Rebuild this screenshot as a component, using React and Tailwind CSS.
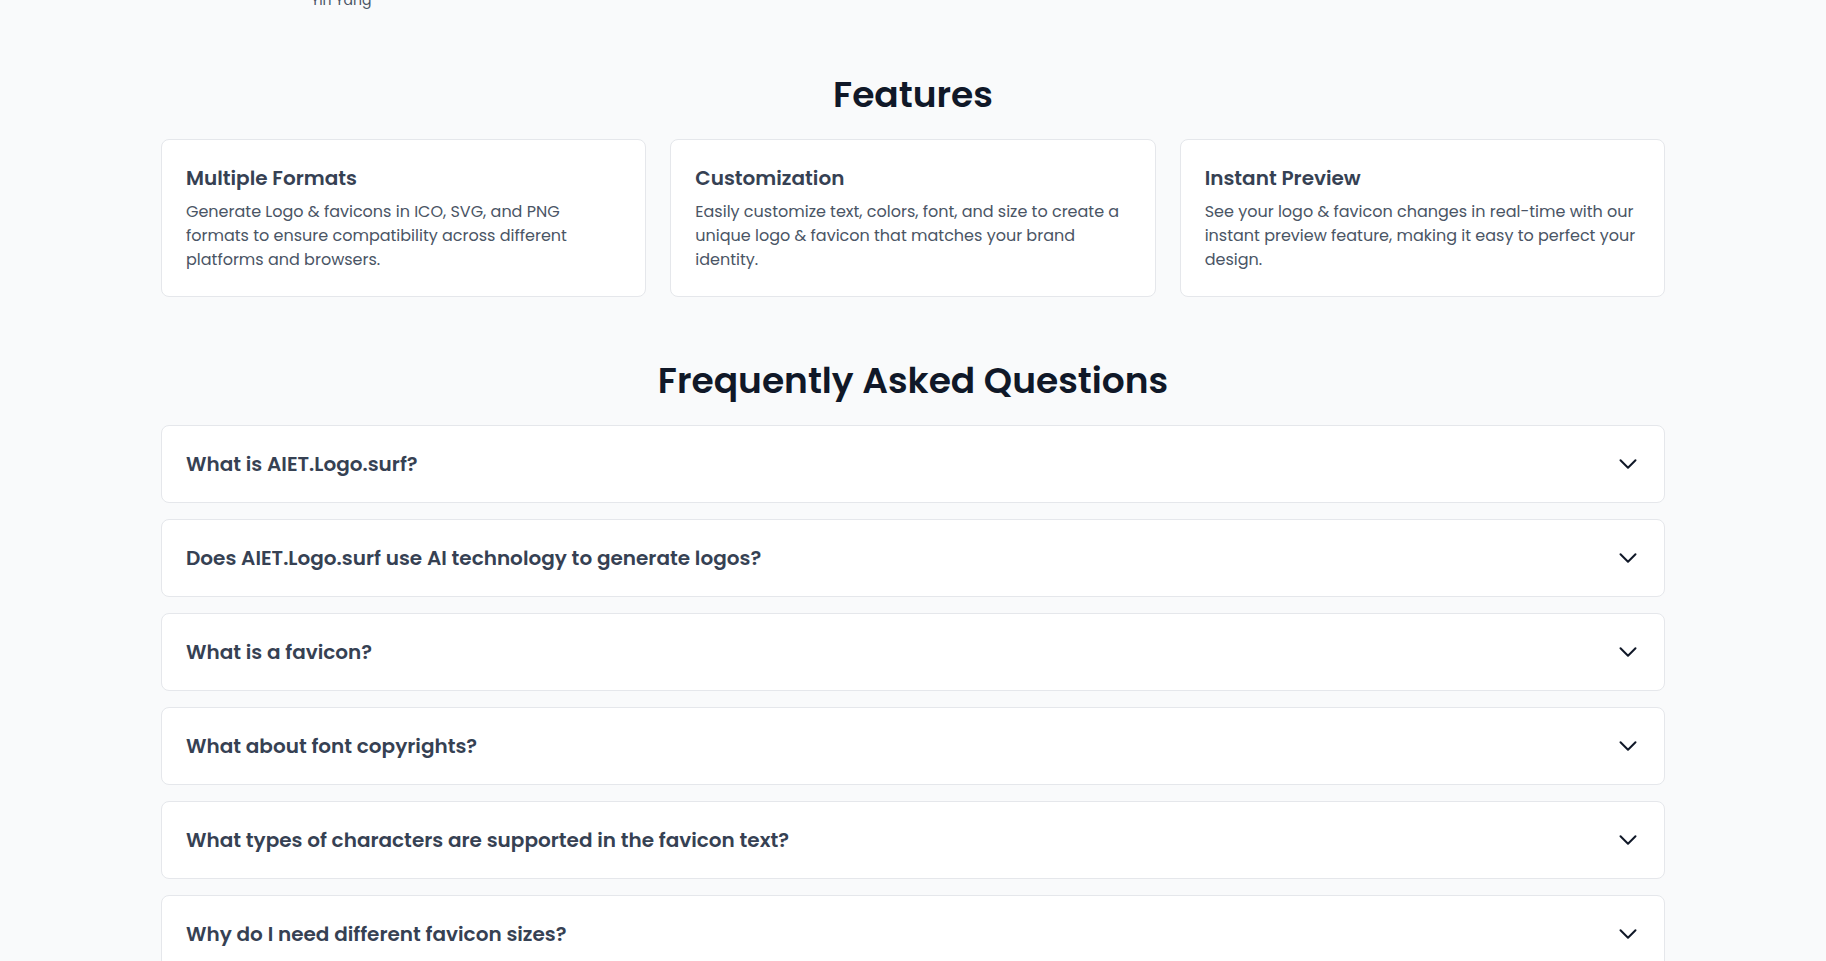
import React from "react";

const features = [
  {
    title: "Multiple Formats",
    lines: [
      "Generate Logo & favicons in ICO, SVG, and PNG",
      "formats to ensure compatibility across different",
      "platforms and browsers.",
    ],
  },
  {
    title: "Customization",
    lines: [
      "Easily customize text, colors, font, and size to create a",
      "unique logo & favicon that matches your brand",
      "identity.",
    ],
  },
  {
    title: "Instant Preview",
    lines: [
      "See your logo & favicon changes in real-time with our",
      "instant preview feature, making it easy to perfect your",
      "design.",
    ],
  },
];

const faqs = [
  "What is AIET.Logo.surf?",
  "Does AIET.Logo.surf use AI technology to generate logos?",
  "What is a favicon?",
  "What about font copyrights?",
  "What types of characters are supported in the favicon text?",
  "Why do I need different favicon sizes?",
];

function Chevron() {
  return (
    <svg
      width="24"
      height="24"
      viewBox="0 0 24 24"
      fill="none"
      stroke="currentColor"
      strokeWidth="2"
      className="text-gray-900 shrink-0"
    >
      <path strokeLinecap="round" strokeLinejoin="round" d="m19.5 8.25-7.5 7.5-7.5-7.5" />
    </svg>
  );
}

export default function App() {
  return (
    <div
      className="min-h-screen bg-gray-50 overflow-hidden"
      style={{ fontFamily: "Poppins, Inter, 'Noto Sans', sans-serif" }}
    >
      <div className="mx-auto w-full max-w-[1504px]">
        <div className="h-[12px] -mt-[10px] pl-[150px] text-sm leading-5 text-gray-600">
          Yin Yang
        </div>

        <h2 className="mt-[73px] text-center text-4xl font-semibold text-gray-900">Features</h2>
        <div className="mt-6 grid grid-cols-3 gap-6">
          {features.map((f) => (
            <div key={f.title} className="rounded-lg border border-gray-200 bg-white p-6">
              <h3 className="text-xl leading-7 font-semibold text-gray-700">{f.title}</h3>
              <p className="mt-2 text-base leading-6 text-gray-600 whitespace-nowrap">
                {f.lines.map((l, i) => (
                  <React.Fragment key={i}>
                    {l}
                    {i < f.lines.length - 1 && <br />}
                  </React.Fragment>
                ))}
              </p>
            </div>
          ))}
        </div>

        <h2 className="mt-16 text-center text-4xl font-semibold text-gray-900">
          Frequently Asked Questions
        </h2>
        <div className="mt-6 flex flex-col gap-4 pb-10">
          {faqs.map((q) => (
            <div
              key={q}
              className="flex items-center justify-between rounded-lg border border-gray-200 bg-white px-6 py-6"
            >
              <span className="text-xl leading-7 font-semibold text-gray-700">{q}</span>
              <Chevron />
            </div>
          ))}
        </div>
      </div>
    </div>
  );
}
